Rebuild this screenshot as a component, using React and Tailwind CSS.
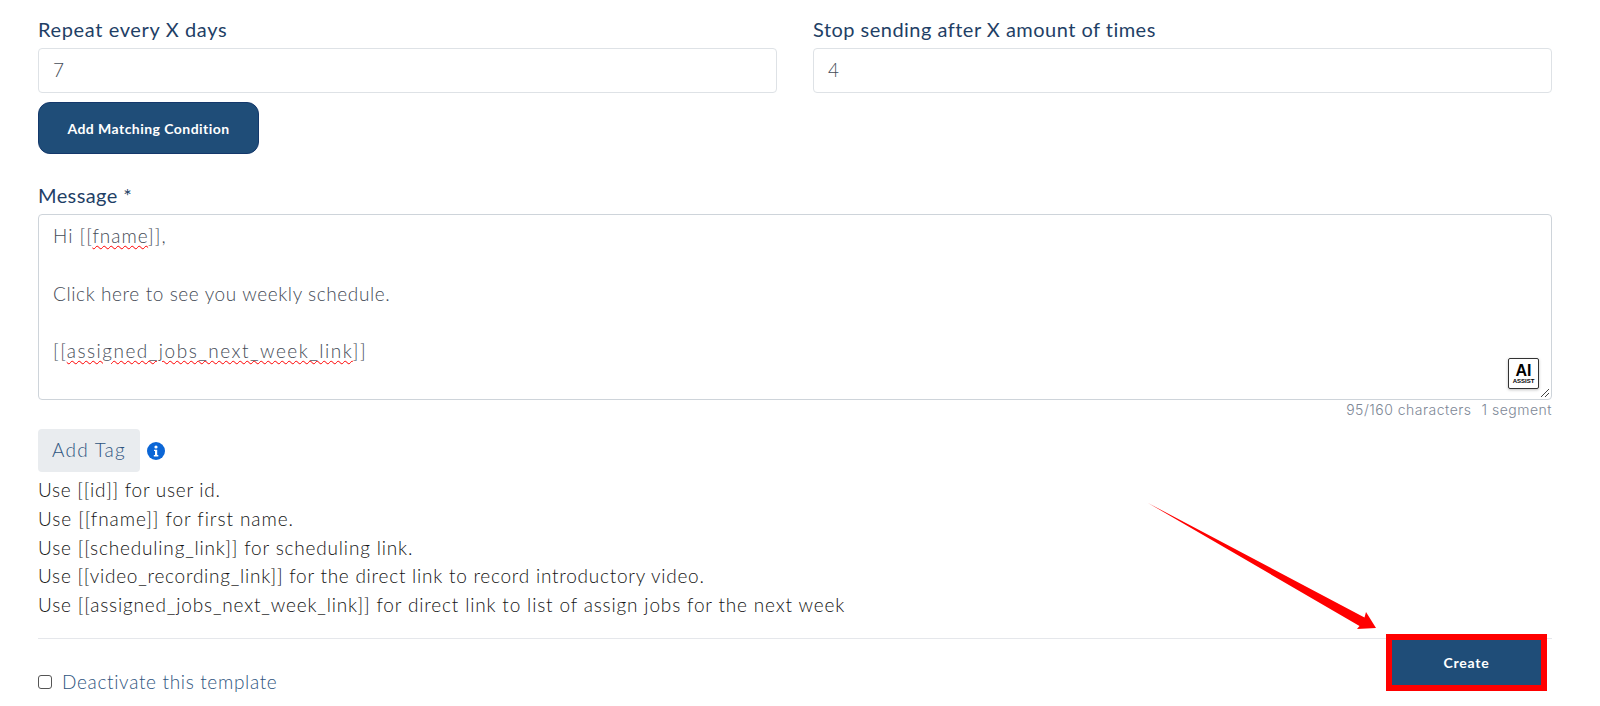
import React from "react";

const Wavy = ({ children }) => (
  <span className="underline decoration-wavy decoration-[#ff0000] decoration-1 underline-offset-2">{children}</span>
);

function Arrow() {
  return (
    <svg className="absolute left-[1140px] top-[495px] pointer-events-none" width="245" height="140" viewBox="1140 495 245 140">
      <path d="M1148 503 L1364.5 617.5 L1366 612 L1376 628 L1357 629 L1359.5 626 Z" fill="#ff0000" />
    </svg>
  );
}

function AiBadge() {
  return (
    <div className="absolute right-[12px] bottom-[10px] w-[31px] h-[31px] bg-white border border-[#333] rounded-[2px] shadow-[0_1px_3px_rgba(0,0,0,0.25)] flex flex-col items-center justify-center font-['Liberation_Sans',sans-serif] tracking-normal text-black">
      <span className="text-[16px] font-bold leading-[15px]">AI</span>
      <span className="text-[6px] font-bold leading-[7px]">ASSIST</span>
    </div>
  );
}

export default function App() {
  return (
    <div className="relative w-[1600px] h-[706px] overflow-hidden bg-white font-['Lato',sans-serif] text-[19px] font-light">
      <div className="pl-[38px] pr-[48px] pt-[16px]">
        <div className="grid grid-cols-2 gap-x-[36px]">
          <div>
            <label className="block text-[#1f3f66] font-normal text-[20px] tracking-[0.63px] leading-[27px] mb-[5px]">Repeat every X days</label>
            <div className="h-[45px] border border-[#dee2e6] rounded-[4px] px-[14px] flex items-center text-[#454c57]">7</div>
          </div>
          <div>
            <label className="block text-[#1f3f66] font-normal text-[20px] tracking-[0.48px] leading-[27px] mb-[5px]">Stop sending after X amount of times</label>
            <div className="h-[45px] border border-[#dee2e6] rounded-[4px] px-[14px] flex items-center text-[#454c57]">4</div>
          </div>
        </div>

        <button className="block mt-[9px] w-[221px] h-[52px] rounded-[12px] bg-[#1f4d78] border border-[#14386b] text-white text-[14px] font-bold tracking-[0.45px]">
          Add Matching Condition
        </button>

        <label className="block mt-[28px] text-[#1f3f66] font-normal text-[20px] tracking-[0.4px] leading-[27px]">Message *</label>

        <div className="relative mt-[5px] h-[186px] border border-[#ced4da] rounded-[4px] px-[14px] pt-[7px] text-[#454c57] leading-[28.8px]">
          <div className="tracking-[1px]">Hi [[<Wavy>fname</Wavy>]],</div>
          <div className="h-[28.8px]"></div>
          <div className="tracking-[0.6px]">Click here to see you weekly schedule.</div>
          <div className="h-[28.8px]"></div>
          <div className="tracking-[1.5px]">[[<Wavy>assigned_jobs_next_week_link</Wavy>]]</div>
          <AiBadge />
          <svg className="absolute right-[1px] bottom-[1px]" width="10" height="10" viewBox="0 0 10 10">
            <path d="M1 9 L9 1 M5 9 L9 5" stroke="#444" strokeWidth="1" fill="none" />
          </svg>
        </div>

        <div className="flex justify-end items-center gap-[10px] h-[19px] text-[14px] tracking-[0.5px] text-[#7d8796] font-['Inter',sans-serif] font-light">
          <span>95/160 characters</span>
          <span>1 segment</span>
        </div>

        <div className="flex items-center mt-[10px]">
          <div className="w-[102px] h-[43px] rounded-[4px] bg-[#e9ecef] text-[#2f5580] tracking-[1.2px] flex items-center justify-center">Add Tag</div>
          <svg className="ml-[7px]" width="18" height="18" viewBox="0 0 18 18">
            <circle cx="9" cy="9" r="9" fill="#0b66d6" />
            <circle cx="9" cy="5" r="1.6" fill="#fff" />
            <path d="M7 7.7h3.2v5.3h1.1v1.4H6.8V13h1.2V9.1h-1z" fill="#fff" />
          </svg>
        </div>

        <div className="mt-[4px] text-[#141414] leading-[28.8px]">
          <div className="tracking-[0.72px]">Use [[id]] for user id.</div>
          <div className="tracking-[0.93px]">Use [[fname]] for first name.</div>
          <div className="tracking-[0.82px]">Use [[scheduling_link]] for scheduling link.</div>
          <div className="tracking-[0.75px]">Use [[video_recording_link]] for the direct link to record introductory video.</div>
          <div className="tracking-[0.83px]">Use [[assigned_jobs_next_week_link]] for direct link to list of assign jobs for the next week</div>
        </div>

        <div className="mt-[18px] border-t border-[#e5e7eb] flex justify-between items-start">
          <label className="flex items-center mt-[29px]">
            <span className="w-[14px] h-[14px] border border-[#555] rounded-[3px] bg-white"></span>
            <span className="ml-[10px] text-[#2f5580] tracking-[0.67px]">Deactivate this template</span>
          </label>
          <button className="-mt-[5px] mr-[5px] w-[161px] h-[57px] border-[6px] border-[#ff0000] bg-[#1f4d78] text-white text-[14px] font-bold tracking-[0.8px]">
            Create
          </button>
        </div>
      </div>
      <Arrow />
    </div>
  );
}
